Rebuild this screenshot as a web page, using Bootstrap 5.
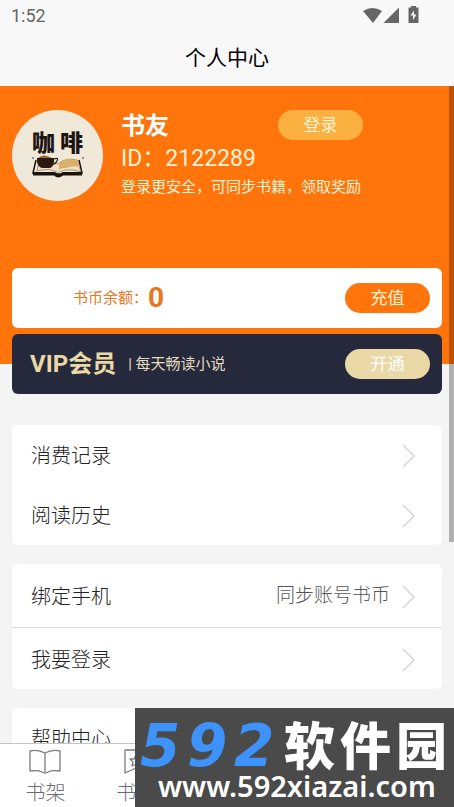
<!DOCTYPE html>
<html lang="zh-CN">
<head>
<meta charset="utf-8">
<meta name="viewport" content="width=device-width, initial-scale=1">
<title>个人中心</title>
<link href="https://cdn.jsdelivr.net/npm/bootstrap@5.3.0/dist/css/bootstrap.min.css" rel="stylesheet">
<style>
  :root { --brand: #ff750c; --gold: #ead9a6; --cream: #fff3d6; }
  body { font-family: Roboto, "Noto Sans CJK SC", sans-serif; background: #f4f4f4; color: #303133; }
  .top-area { background: #f8f8f8; }
  .status-bar { height: 29px; color: #666; font-size: 18px; line-height: 30px; padding: 1px 35px 0 11px; }
  .page-title { font-size: 21px; line-height: 58px; height: 57px; color: #000; }
  .hero { background: var(--brand); height: 278px; padding: 24px 12px 0; }
  .avatar { width: 91px; height: 91px; }
  .profile { padding-left: 18px; }
  .nickname { font-size: 24px; line-height: 32px; }
  .user-id { font-size: 23px; line-height: 34px; color: var(--cream); }
  .user-tip { font-size: 15px; line-height: 22px; color: var(--cream); }
  .pill { width: 85px; height: 30px; padding: 0; border: 0; font-size: 17px; line-height: 30px; color: #fff; }
  .pill-login { background: #fcb040; margin-right: 79px; color: var(--cream); }
  .pill-pay { background: var(--brand); color: var(--cream); }
  .pill-vip { background: var(--gold); }
  .panels { margin-top: -96px; padding: 0 12px; }
  .panel { height: 60px; border-radius: 6px; padding-right: 12px; }
  .wallet { background: #fff; color: #e87722; margin-bottom: 6px; padding-left: 61px; font-size: 15px; }
  .coins { font-size: 28px; line-height: 32px; }
  .vip { background: #26293b; color: var(--gold); padding-left: 18px; margin-bottom: 31px; }
  .vip-name { font-size: 24px; }
  .vip-tip { font-size: 15px; color: #e5dcc0; }
  .menu-group { --bs-list-group-border-radius: 6px; --bs-list-group-border-width: 0; margin-bottom: 19px; }
  .menu-row { height: 60px; padding: 2px 26px 0 19px; font-size: 20px; font-weight: 300; color: #222; }
  .menu-tall .menu-row { height: 61px; }
  .menu-tall .menu-row:first-child { height: 64px; border-bottom: 1px solid #ddd; }
  .menu-note { font-size: 19px; color: #555; }
  .scroll-thumb { width: 5px; height: 456px; background: rgba(0, 0, 0, .28); }
  .tab-bar { height: 64px; border-top: 1px solid #c4c4c4; background: #fff; }
  .tab-link { font-size: 20px; font-weight: 300; line-height: 34px; color: #6a6c70; padding-top: 4px; }
  .site-mark { width: 319px; height: 99px; background: #4a4a4a; padding-left: 5px; }
  .mark-name { height: 62px; padding-top: 11px; }
  .mark-num { font: italic bold 58px/54px "DejaVu Sans", sans-serif; color: #3d92fb; width: 144px; }
  .mark-num span { width: 47px; }
  .mark-cn { font: 900 51px/48px "Noto Sans CJK SC", sans-serif; }
  .mark-cn span { width: 56px; }
  .mark-url { font: 600 29px/32px "Noto Sans", "Open Sans", sans-serif; padding-left: 18px; }
</style>
</head>
<body class="vh-100 overflow-hidden d-flex flex-column">
<header class="top-area flex-shrink-0">
  <div class="status-bar d-flex justify-content-between">
    <span>1:52</span>
    <svg width="56" height="18" viewBox="0 0 56 18" class="mt-1" fill="#666" aria-hidden="true">
      <path d="M0 5Q9.500-1 19 5L10 17Z" transform="translate(0 1)"/>
      <path d="M36 2.500V18H20.500Z"/>
      <path d="M45.500 2.500h2.500V1h5v1.500h2.500v15.500H45.500V2.500Z"/>
      <path d="M51 5.500l-3.500 5h2.500v4.500l3.500-5.500h-2.500Z" fill="#f8f8f8"/>
    </svg>
  </div>
  <h1 class="page-title text-center fw-normal m-0">个人中心</h1>
</header>

<main class="position-relative flex-grow-1 overflow-hidden">
  <section class="hero">
    <div class="d-flex">
      <svg class="avatar flex-shrink-0" viewBox="0 0 91 91" role="img" aria-label="咖啡">
        <circle cx="45.500" cy="45.500" r="45.500" fill="#f0e8d8"/>
        <text x="20" y="41" font-family="Noto Sans CJK SC, sans-serif" font-weight="900" font-size="23" fill="#1c1512">咖</text>
        <text x="48" y="41" font-family="Noto Sans CJK SC, sans-serif" font-weight="900" font-size="23" fill="#1c1512">啡</text>
        <path d="M24 50l-3 13h22q4 3 8 0h19l-3-13" fill="none" stroke="#17110f" stroke-width="1.500"/>
        <path d="M46 63c-5-4-13-4-21-2l2-10q11-3 19 3 8-7 19-4l4 12c-9-3-17-3-23 1Z" fill="#eee0c2" stroke="#776047" stroke-width=".6"/>
        <path d="M47 60V54q7-7 14-4l4-1 3 8q-9-2-13 1-4-1-8 2Z" fill="#dcae68"/>
        <path d="M25 48h17v4q-1 6-5 6h-7q-4-1-5-6Z" fill="#2a1813"/>
        <path d="M26 48q5-5 14 0Z" fill="#9a6333"/>
        <path d="M42 49q5-2 3 2t-5 3" fill="none" stroke="#2a1813" stroke-width="1.200"/>
        <path d="M21 62h21q5 3 9 0h19v3.500H51q-5 4-9 0H21Z" fill="#1a1310"/>
        <circle cx="21" cy="48" r="1" fill="#777"/><circle cx="71" cy="48" r="1" fill="#777"/>
      </svg>
      <div class="profile flex-grow-1">
        <div class="d-flex justify-content-between">
          <span class="nickname fw-bold text-white">书友</span>
          <button type="button" class="btn rounded-pill pill pill-login">登录</button>
        </div>
        <div class="user-id">ID：2122289</div>
        <div class="user-tip">登录更安全，可同步书籍，领取奖励</div>
      </div>
    </div>
  </section>

  <div class="panels">
    <section class="panel wallet d-flex align-items-center">
      <span>书币余额：</span><strong class="coins">0</strong>
      <button type="button" class="btn rounded-pill pill pill-pay ms-auto">充值</button>
    </section>
    <section class="panel vip d-flex align-items-center">
      <strong class="vip-name">VIP会员</strong><span class="vip-tip ms-2 ps-1">| 每天畅读小说</span>
      <button type="button" class="btn rounded-pill pill pill-vip ms-auto">开通</button>
    </section>

    <nav class="list-group menu-group">
      <a href="#" class="list-group-item menu-row d-flex align-items-center">消费记录
        <svg class="ms-auto" width="14" height="24" fill="none" stroke="#d6d6d6" stroke-width="1.500"><path d="M1 1l11 11L1 23"/></svg></a>
      <a href="#" class="list-group-item menu-row d-flex align-items-center">阅读历史
        <svg class="ms-auto" width="14" height="24" fill="none" stroke="#d6d6d6" stroke-width="1.500"><path d="M1 1l11 11L1 23"/></svg></a>
    </nav>
    <nav class="list-group menu-group menu-tall">
      <a href="#" class="list-group-item menu-row d-flex align-items-center">绑定手机
        <span class="menu-note ms-auto me-2 pe-1">同步账号书币</span>
        <svg width="14" height="24" fill="none" stroke="#d6d6d6" stroke-width="1.500"><path d="M1 1l11 11L1 23"/></svg></a>
      <a href="#" class="list-group-item menu-row d-flex align-items-center">我要登录
        <svg class="ms-auto" width="14" height="24" fill="none" stroke="#d6d6d6" stroke-width="1.500"><path d="M1 1l11 11L1 23"/></svg></a>
    </nav>
    <nav class="list-group menu-group">
      <a href="#" class="list-group-item menu-row d-flex align-items-center">帮助中心</a>
    </nav>
  </div>
  <div class="scroll-thumb position-absolute top-0 end-0"></div>
</main>

<footer class="tab-bar flex-shrink-0">
  <nav class="row row-cols-5 g-0 text-center">
    <a href="#" class="col tab-link d-flex flex-column align-items-center text-decoration-none">
      <svg width="32" height="28" viewBox="0 0 32 28" fill="none" stroke="#7a7c80" stroke-width="1.300" stroke-linejoin="round"><path d="M16 5Q9 1 1 3v20q8-1 12 1 3 2 6 0 4-2 12-1V3Q23 1 16 5v19"/></svg>
      <span>书架</span></a>
    <a href="#" class="col tab-link d-flex flex-column align-items-center text-decoration-none">
      <svg width="24" height="28" viewBox="0 0 24 28" fill="none" stroke="#7a7c80" stroke-width="1.300" stroke-linejoin="round"><path d="M1 2h22v23l-11-5-11 5ZM12 7l2 4 4 0-3 3 1 4-4-2-4 2 1-4-3-3 4 0Z"/></svg>
      <span>书城</span></a>
  </nav>
</footer>

<aside class="site-mark position-fixed bottom-0 end-0 text-white text-nowrap overflow-hidden">
  <div class="mark-name d-flex"><div class="mark-num d-flex"><span>5</span><span>9</span><span>2</span></div><div class="mark-cn d-flex"><span>软</span><span>件</span><span>园</span></div></div>
  <div class="mark-url">www.592xiazai.com</div>
</aside>
<script src="https://cdn.jsdelivr.net/npm/bootstrap@5.3.0/dist/js/bootstrap.bundle.min.js"></script>
</body>
</html>
